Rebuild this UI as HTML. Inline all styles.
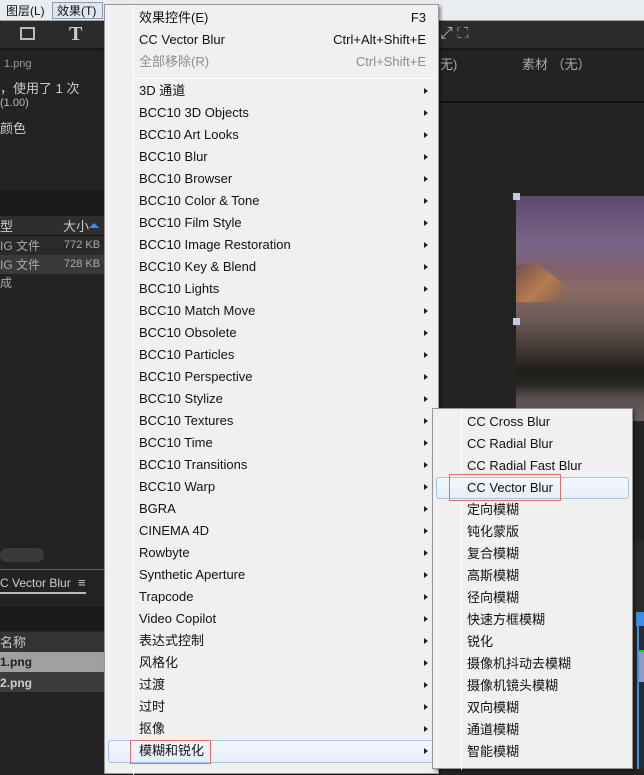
<!DOCTYPE html>
<html><head><meta charset="utf-8"><style>
*{margin:0;padding:0;box-sizing:border-box}
body{width:644px;height:769px;overflow:hidden;background:#232323;position:relative;font-family:"Liberation Sans","Noto Sans CJK SC",sans-serif;font-size:13px}
.a{position:absolute}
.t{position:absolute;white-space:nowrap;line-height:1.2}
.menu{position:absolute;background:#f0f0f0;border:1px solid #979797;box-shadow:2px 2px 3px rgba(0,0,0,.4)}
.it{position:absolute;left:0;right:0;height:22px;line-height:22px;color:#111}
.it .l{position:absolute;left:34px}
.it .r{position:absolute;right:12px}
.arr{position:absolute;right:10px;top:8px;width:0;height:0;border-left:4px solid #222;border-top:3.5px solid transparent;border-bottom:3.5px solid transparent}
</style></head><body>
<div class="a" style="left:0;top:0;width:644px;height:21px;background:#e9ecf1;border-bottom:1px solid #a0a0a0"></div>
<div class="t" style="left:6px;top:4px;color:#111;font-size:12px">图层(L)</div>
<div class="a" style="left:52px;top:2px;width:51px;height:17px;border:1px solid #8a9bb0;background:#dfe6ef"></div>
<div class="t" style="left:57px;top:4px;color:#111;font-size:12px">效果(T)</div>
<div class="a" style="left:0;top:21px;width:644px;height:27px;background:#2b2b2b"></div>
<div class="a" style="left:20px;top:27px;width:15px;height:13px;border:2px solid #bbb"></div>
<div class="t" style="left:69px;top:22px;color:#ccc;font-size:20px;font-family:'Liberation Serif',serif;font-weight:bold">T</div>
<div class="t" style="left:440px;top:24px;color:#bbb;font-size:16px">⤢ ⛶</div>
<div class="a" style="left:0;top:48px;width:644px;height:3px;background:#1a1a1a"></div>
<div class="t" style="left:4px;top:58px;font-size:11px;color:#999">1.png</div>
<div class="t" style="left:0;top:81px;color:#ccc">，使用了 1 次</div>
<div class="t" style="left:0;top:97px;color:#bbb;font-size:11px">(1.00)</div>
<div class="t" style="left:0;top:121px;color:#ccc">颜色</div>
<div class="a" style="left:0;top:190px;width:104px;height:26px;background:#1b1b1b"></div>
<div class="a" style="left:0;top:216px;width:104px;height:20px;background:#2e2e2e;border-bottom:1px solid #111"></div>
<div class="t" style="left:0;top:219px;color:#ccc">型</div>
<div class="t" style="left:63px;top:219px;color:#ccc">大小</div>
<div class="a" style="left:89px;top:223px;width:0;height:0;border-left:5px solid transparent;border-right:5px solid transparent;border-bottom:5px solid #3a8ee6"></div>
<div class="a" style="left:0;top:236px;width:104px;height:19px;background:#2a2a2a"></div>
<div class="a" style="left:0;top:255px;width:104px;height:19px;background:#3a3a3a"></div>
<div class="t" style="left:0;top:239px;color:#aaa;font-size:12px">IG 文件</div>
<div class="t" style="left:64px;top:239px;color:#aaa;font-size:11px">772 KB</div>
<div class="t" style="left:0;top:258px;color:#aaa;font-size:12px">IG 文件</div>
<div class="t" style="left:64px;top:258px;color:#aaa;font-size:11px">728 KB</div>
<div class="t" style="left:0;top:276px;color:#aaa;font-size:12px">成</div>
<div class="a" style="left:0;top:548px;width:44px;height:14px;background:#3a3a3a;border-radius:7px"></div>
<div class="a" style="left:0;top:569px;width:104px;height:1px;background:#2d6fb0"></div>
<div class="t" style="left:0;top:576px;color:#ccc;font-size:12px">C Vector Blur</div>
<div class="t" style="left:78px;top:575px;color:#ccc">≡</div>
<div class="a" style="left:0;top:592px;width:86px;height:2px;background:#bbb"></div>
<div class="a" style="left:0;top:607px;width:104px;height:24px;background:#1b1b1b"></div>
<div class="a" style="left:0;top:632px;width:104px;height:20px;background:#333"></div>
<div class="t" style="left:0;top:635px;color:#ccc">名称</div>
<div class="a" style="left:0;top:652px;width:104px;height:20px;background:#a0a0a0"></div>
<div class="t" style="left:0;top:655px;color:#222;font-weight:bold;font-size:12px">1.png</div>
<div class="a" style="left:0;top:672px;width:104px;height:20px;background:#3c3c3c"></div>
<div class="t" style="left:0;top:676px;color:#ccc;font-weight:bold;font-size:12px">2.png</div>
<div class="t" style="left:440px;top:57px;color:#aaa">无)</div>
<div class="t" style="left:522px;top:57px;color:#aaa">素材 （无）</div>
<div class="a" style="left:438px;top:101px;width:206px;height:2px;background:#111"></div>
<div class="a" style="left:516px;top:196px;width:128px;height:225px;background:linear-gradient(180deg,#5c4a6e 0%,#7a6587 22%,#7e6270 32%,#8a6a63 42%,#6d5a57 55%,#4b3e3a 66%,#1e1c18 78%,#2a2824 84%,#5a5052 90%,#6a5e5a 100%)"></div>
<div class="a" style="left:516px;top:262px;width:50px;height:40px;background:linear-gradient(135deg,#6b4a48,#c0804c 55%,#7a5e56);opacity:.85;clip-path:polygon(0 10%,40% 0,100% 60%,100% 100%,0 100%)"></div>
<div class="a" style="left:513px;top:193px;width:7px;height:7px;background:#c8c8e0"></div>
<div class="a" style="left:513px;top:318px;width:7px;height:7px;background:#c8c8e0"></div>
<div class="a" style="left:632px;top:540px;width:12px;height:229px;background:#2a2a2a"></div>
<div class="a" style="left:636px;top:612px;width:8px;height:14px;background:#3a8ee6"></div>
<div class="a" style="left:637px;top:626px;width:2px;height:143px;background:#3a8ee6"></div>
<div class="a" style="left:639px;top:650px;width:5px;height:2px;background:#2c2"></div>
<div class="a" style="left:639px;top:652px;width:5px;height:30px;background:#9a98b8"></div>
<div class="menu" style="left:104px;top:4px;width:335px;height:770px">
<div class="a" style="left:28px;top:0;width:1px;height:770px;background:#e2e3e3;border-right:1px solid #fff"></div>
<div class="it" style="top:2px"><span class="l">效果控件(E)</span><span class="r">F3</span></div>
<div class="it" style="top:24px"><span class="l">CC Vector Blur</span><span class="r">Ctrl+Alt+Shift+E</span></div>
<div class="it" style="top:46px;color:#8d8d8d"><span class="l">全部移除(R)</span><span class="r">Ctrl+Shift+E</span></div>
<div class="a" style="left:30px;right:2px;top:73px;height:1px;background:#d5d5d5;border-bottom:1px solid #fff"></div>
<div class="it" style="top:75px"><span class="l">3D 通道</span><i class="arr"></i></div>
<div class="it" style="top:97px"><span class="l">BCC10 3D Objects</span><i class="arr"></i></div>
<div class="it" style="top:119px"><span class="l">BCC10 Art Looks</span><i class="arr"></i></div>
<div class="it" style="top:141px"><span class="l">BCC10 Blur</span><i class="arr"></i></div>
<div class="it" style="top:163px"><span class="l">BCC10 Browser</span><i class="arr"></i></div>
<div class="it" style="top:185px"><span class="l">BCC10 Color &amp; Tone</span><i class="arr"></i></div>
<div class="it" style="top:207px"><span class="l">BCC10 Film Style</span><i class="arr"></i></div>
<div class="it" style="top:229px"><span class="l">BCC10 Image Restoration</span><i class="arr"></i></div>
<div class="it" style="top:251px"><span class="l">BCC10 Key &amp; Blend</span><i class="arr"></i></div>
<div class="it" style="top:273px"><span class="l">BCC10 Lights</span><i class="arr"></i></div>
<div class="it" style="top:295px"><span class="l">BCC10 Match Move</span><i class="arr"></i></div>
<div class="it" style="top:317px"><span class="l">BCC10 Obsolete</span><i class="arr"></i></div>
<div class="it" style="top:339px"><span class="l">BCC10 Particles</span><i class="arr"></i></div>
<div class="it" style="top:361px"><span class="l">BCC10 Perspective</span><i class="arr"></i></div>
<div class="it" style="top:383px"><span class="l">BCC10 Stylize</span><i class="arr"></i></div>
<div class="it" style="top:405px"><span class="l">BCC10 Textures</span><i class="arr"></i></div>
<div class="it" style="top:427px"><span class="l">BCC10 Time</span><i class="arr"></i></div>
<div class="it" style="top:449px"><span class="l">BCC10 Transitions</span><i class="arr"></i></div>
<div class="it" style="top:471px"><span class="l">BCC10 Warp</span><i class="arr"></i></div>
<div class="it" style="top:493px"><span class="l">BGRA</span><i class="arr"></i></div>
<div class="it" style="top:515px"><span class="l">CINEMA 4D</span><i class="arr"></i></div>
<div class="it" style="top:537px"><span class="l">Rowbyte</span><i class="arr"></i></div>
<div class="it" style="top:559px"><span class="l">Synthetic Aperture</span><i class="arr"></i></div>
<div class="it" style="top:581px"><span class="l">Trapcode</span><i class="arr"></i></div>
<div class="it" style="top:603px"><span class="l">Video Copilot</span><i class="arr"></i></div>
<div class="it" style="top:625px"><span class="l">表达式控制</span><i class="arr"></i></div>
<div class="it" style="top:647px"><span class="l">风格化</span><i class="arr"></i></div>
<div class="it" style="top:669px"><span class="l">过渡</span><i class="arr"></i></div>
<div class="it" style="top:691px"><span class="l">过时</span><i class="arr"></i></div>
<div class="it" style="top:713px"><span class="l">抠像</span><i class="arr"></i></div>
<div class="a" style="left:3px;right:3px;top:735px;height:23px;background:linear-gradient(#f4f8fd,#e6eef9);border:1px solid #a8c4e6;border-radius:3px"></div>
<div class="it" style="top:735px"><span class="l">模糊和锐化</span><i class="arr"></i></div>
<div class="a" style="left:25px;top:735px;width:81px;height:24px;border:1px solid #e07070"></div>
</div>
<div class="menu" style="left:432px;top:408px;width:201px;height:361px">
<div class="a" style="left:28px;top:0;width:1px;height:361px;background:#e2e3e3;border-right:1px solid #fff"></div>
<div class="it" style="top:2px"><span class="l">CC Cross Blur</span></div>
<div class="it" style="top:24px"><span class="l">CC Radial Blur</span></div>
<div class="it" style="top:46px"><span class="l">CC Radial Fast Blur</span></div>
<div class="a" style="left:3px;right:3px;top:68px;height:22px;background:linear-gradient(#f4f8fd,#e6eef9);border:1px solid #a8c4e6;border-radius:3px"></div>
<div class="it" style="top:68px"><span class="l">CC Vector Blur</span></div>
<div class="a" style="left:16px;top:65px;width:112px;height:27px;border:1px solid #e07070"></div>
<div class="it" style="top:90px"><span class="l">定向模糊</span></div>
<div class="it" style="top:112px"><span class="l">钝化蒙版</span></div>
<div class="it" style="top:134px"><span class="l">复合模糊</span></div>
<div class="it" style="top:156px"><span class="l">高斯模糊</span></div>
<div class="it" style="top:178px"><span class="l">径向模糊</span></div>
<div class="it" style="top:200px"><span class="l">快速方框模糊</span></div>
<div class="it" style="top:222px"><span class="l">锐化</span></div>
<div class="it" style="top:244px"><span class="l">摄像机抖动去模糊</span></div>
<div class="it" style="top:266px"><span class="l">摄像机镜头模糊</span></div>
<div class="it" style="top:288px"><span class="l">双向模糊</span></div>
<div class="it" style="top:310px"><span class="l">通道模糊</span></div>
<div class="it" style="top:332px"><span class="l">智能模糊</span></div>
</div>
</body></html>
